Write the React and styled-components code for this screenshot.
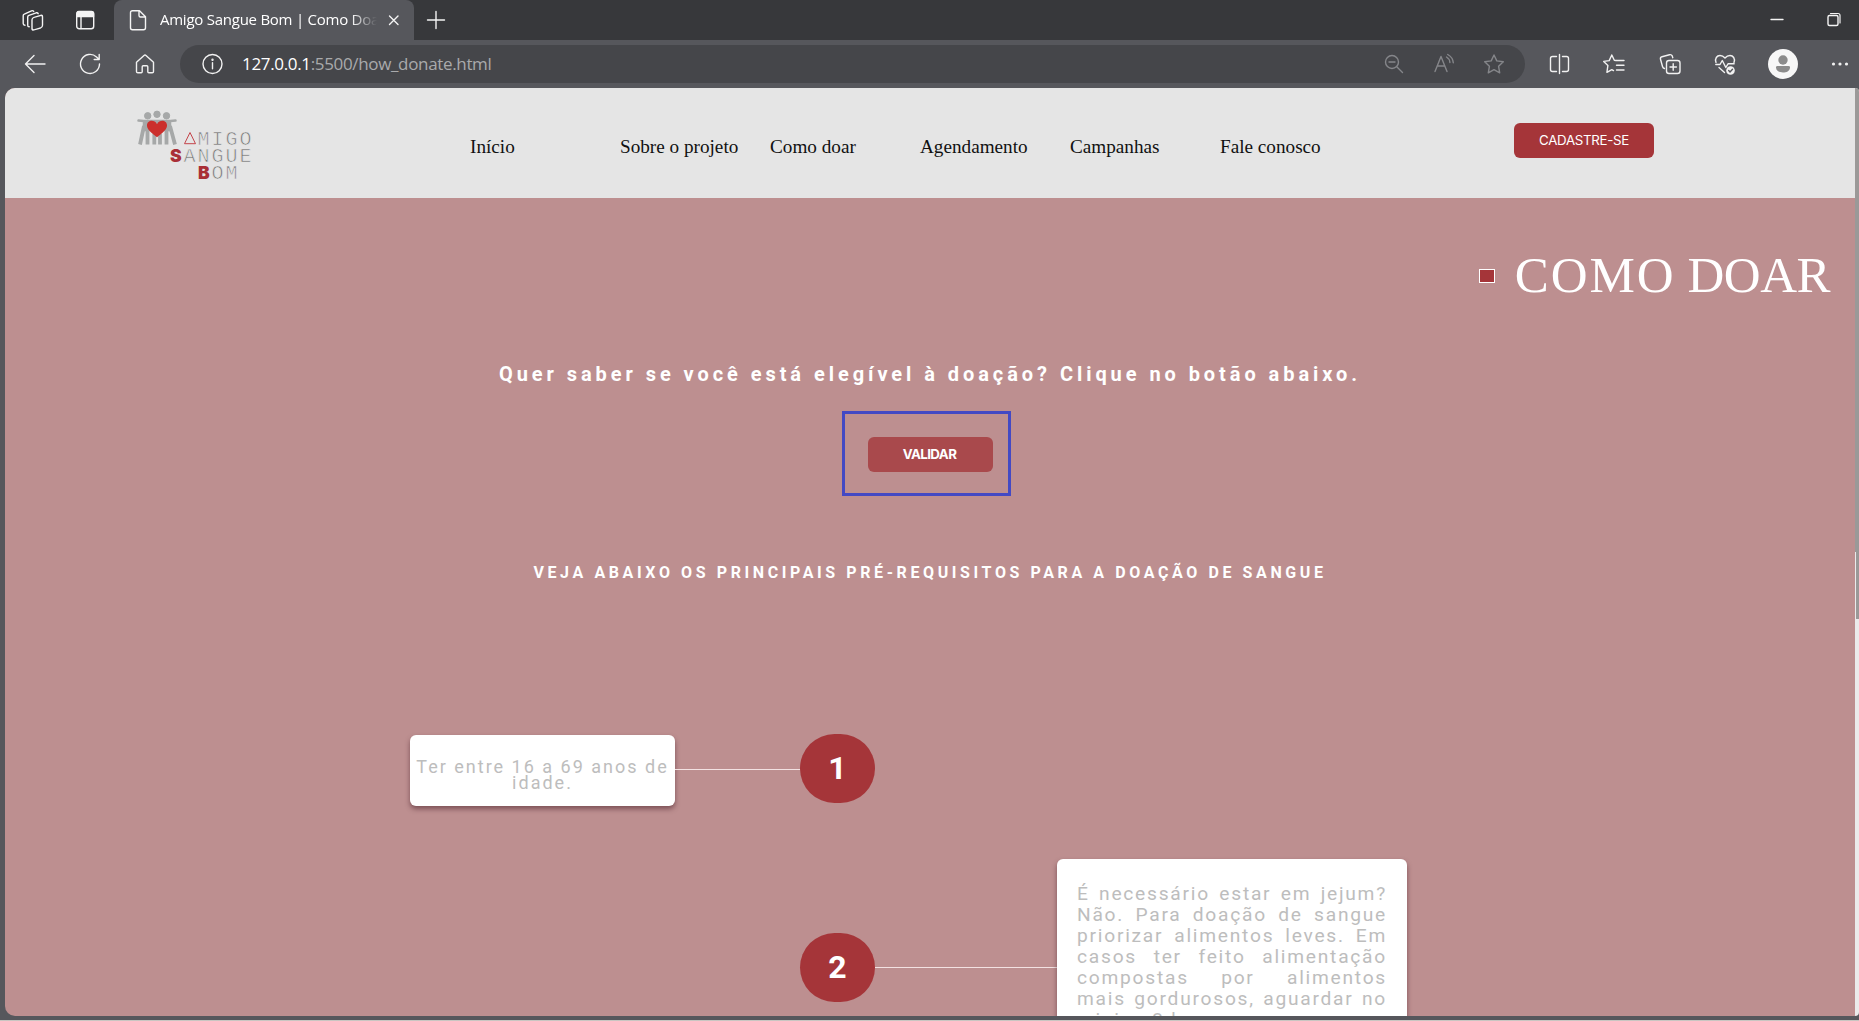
import React from "react";
import styled, { createGlobalStyle, css } from "styled-components";

const Global = createGlobalStyle`
  *, *::before, *::after { box-sizing: border-box; }
  html, body { margin: 0; padding: 0; overflow: hidden; background: #56575c; }
  h1, h2, h3, p { margin: 0; }
  button { border: 0; padding: 0; }
`;

const Window = styled.div`
  width: 1859px;
  height: 1021px;
  display: flex;
  flex-direction: column;
  background: #56575c;
  border-bottom: 1px solid #c9c6c2;
  overflow: hidden;
`;

/* ---------- browser chrome ---------- */

const TitleBar = styled.div`
  height: 40px;
  flex: none;
  display: flex;
  align-items: center;
  background: #37383b;
  color: #f4f4f4;
`;

const TitleTools = styled.div`
  width: 114px;
  padding-left: 21px;
  display: flex;
  gap: 28px;
`;

const Tab = styled.div`
  width: 300px;
  height: 40px;
  padding: 0 7px 0 12px;
  display: flex;
  align-items: center;
  background: #56575c;
  border-radius: 8px 8px 0 0;
`;

const TabTitle = styled.span`
  width: 217px;
  margin-left: 10px;
  margin-right: 4px;
  padding-bottom: 2px;
  overflow: hidden;
  white-space: nowrap;
  font: 400 15px/22px "Open Sans", "Noto Sans", sans-serif;
  letter-spacing: -0.25px;
  color: #fff;
  mask-image: linear-gradient(90deg, #000 88%, transparent 100%);
`;

const NewTab = styled.div`
  margin-left: 9px;
  display: flex;
  flex: 1;
`;

const WindowButtons = styled.div`
  display: flex;
  gap: 33px;
  padding-right: 13px;
`;

const Toolbar = styled.div`
  height: 48px;
  flex: none;
  display: flex;
  align-items: center;
  padding-left: 23px;
  color: #f1f1f1;
`;

const IconGroup = styled.div`
  display: flex;
  align-items: center;
  gap: ${(p) => p.$gap}px;
`;

const AddressBar = styled.div`
  width: 1345px;
  height: 38px;
  margin: 0 22px 0 23px;
  padding: 0 19px 0 20px;
  display: flex;
  align-items: center;
  border-radius: 19px;
  background: #45464a;
`;

const Url = styled.span`
  flex: 1;
  margin-left: 18px;
  font: 400 17px/24px "Open Sans", "Noto Sans", sans-serif;
  letter-spacing: -0.34px;
  color: #a9aaac;
  b { font-weight: 400; color: #fff; }
`;

const Muted = styled(IconGroup)`
  color: #85868a;
`;

const Glyph = styled.svg`
  width: ${(p) => p.$size || 24}px;
  height: ${(p) => p.$size || 24}px;
  flex: none;
  display: block;
  fill: none;
  stroke: currentColor;
  stroke-width: 1.4;
  stroke-linecap: round;
  stroke-linejoin: round;
`;

const Icon = ({ children, size }) => (
  <Glyph viewBox="0 0 24 24" $size={size}>{children}</Glyph>
);

const StackIcon = () => (
  <Icon>
    <rect x="0" y="0" width="10.500" height="12.500" rx="2" transform="matrix(1 -.3 0 1 11 10)" />
    <path d="M8.200 18.800q-1.500-.1-1.500-1.600V9q0-1.300 1.200-1.700l7.300-2.500q1.500-.4 2 .9" />
    <path d="M4 17.200q-1.800-.1-1.800-1.700V7.700q0-1.200 1.100-1.600L10.500 2.800q1.500-.5 2.200.6" />
  </Icon>
);

const WorkspaceIcon = () => (
  <Icon>
    <rect x="3.700" y="3.700" width="17" height="17" rx="2.500" />
    <path d="M4 4.500q.5-1 2-1h12.500q1.700 0 2 1.500v3.500H4z" fill="currentColor" />
    <path d="M8 9v11.500" />
  </Icon>
);

const DocumentIcon = () => (
  <Icon>
    <path d="M6.500 2.700h7l6 6v11q0 2-2 2h-11q-2 0-2-2v-15q0-2 2-2zM13 3v4.500q0 1.500 1.500 1.500h5" />
  </Icon>
);

const BackIcon = () => <Icon><path d="M22 12H2.500M11 3.500 2.500 12l8.500 8.500" /></Icon>;
const RefreshIcon = () => <Icon><path d="M21.500 12a9.500 9.500 0 1 1-3-7l2.500 2.300M21.200 2.500v5h-5" /></Icon>;
const HomeIcon = () => (
  <Icon><path d="M3.500 10.300 11 3.400q1-.9 2 0l7.500 6.900v9.200q0 1.300-1.300 1.300h-3.400q-1 0-1-1v-5q0-1-1-1h-3.600q-1 0-1 1v5q0 1-1 1H4.800q-1.300 0-1.300-1.300z" /></Icon>
);
const InfoIcon = () => (
  <Icon><circle cx="12.500" cy="12" r="9.500" /><path d="M12.500 10.800v6" /><circle cx="12.500" cy="7.800" r=".5" fill="currentColor" /></Icon>
);
const ZoomOutIcon = () => <Icon><circle cx="10" cy="10" r="6.500" /><path d="M7 10h6M15 15l5.500 5.500" /></Icon>;
const ReadAloudIcon = () => (
  <Icon><path d="M3 19.500 9 4.500l6 15M5.200 14h7.600M14.500 5q3.200 1.900 3.400 5.500M15.700 2.500q5.300 3 5.600 8.300" /></Icon>
);
const StarIcon = () => (
  <Icon><path d="m12 3 2.800 5.900 6.500.9-4.700 4.500 1.100 6.500-5.700-3.100-5.700 3.100 1.100-6.500-4.700-4.500 6.500-.9z" /></Icon>
);
const SplitIcon = () => (
  <Icon><path d="M12.500 2.500v19M9.500 4.500h-4Q3.500 4.500 3.500 6.500v11q0 2 2 2h4M15.500 4.500h4q2 0 2 2v11q0 2-2 2h-4" /></Icon>
);
const FavoritesIcon = () => (
  <Icon><path d="m14 8.500-1.700-.3L9.800 3 7.200 8.600l-5.500.8 4.200 4-1 7 4.900-2.800 1.700 1M14.500 8.500h7.500M14.500 13.300h7.500M14.500 18h7.500" /></Icon>
);
const CollectionsIcon = () => (
  <Icon>
    <rect x="8.500" y="8.500" width="13.500" height="13" rx="2.500" />
    <path d="M15.200 11.800v6.400M12 15h6.400M6.500 16.500q-1.500-.3-2-2L2.500 7.300Q2 5.300 4 4.700l7.500-2q2-.4 2.700 1.200l.6 1.800" />
  </Icon>
);
const HealthIcon = () => (
  <Icon>
    <path d="M3 10.500C1.500 6.500 4 3.500 7 3.500q2.800 0 5 2.500 2.200-2.500 5-2.500c3 0 5.500 3 4 7M2.800 12.500H7l2.300-4 3.500 7 2.400-3.800h6M6 15.500l5.500 5" />
    <circle cx="17.500" cy="18.500" r="4.300" fill="currentColor" stroke="none" />
    <path d="m15.700 18.600 1.300 1.300 2.500-2.700" stroke="#56575c" />
  </Icon>
);
const DotsIcon = () => (
  <Icon><g fill="currentColor" stroke="none"><circle cx="4.500" cy="12" r="1.600" /><circle cx="11" cy="12" r="1.600" /><circle cx="17.500" cy="12" r="1.600" /></g></Icon>
);

const Avatar = () => (
  <Glyph viewBox="0 0 30 30" $size={30}>
    <g stroke="none">
      <circle cx="15" cy="15" r="15" fill="#f7f7f7" />
      <circle cx="15" cy="11" r="4.700" fill="#8b8b8b" />
      <path d="M9.500 17h11q1.700 0 1.500 1.700C21.500 22 18.500 23.500 15 23.500S8.500 22 8 18.700Q7.800 17 9.500 17z" fill="#8b8b8b" />
    </g>
  </Glyph>
);

/* ---------- web page ---------- */

const Viewport = styled.div`
  height: 928px;
  flex: none;
  display: flex;
  padding-left: 5px;
`;

const Page = styled.div`
  width: 1850px;
  height: 928px;
  overflow: hidden;
  border-radius: 10px 0 0 10px;
  background: #bd8f90;
`;

const Scrollbar = styled.div`
  flex: 1;
  background: #ebebeb;
  border-radius: 0 6px 6px 0;
  overflow: hidden;
`;

const Thumb = styled.div`
  height: 531px;
  background: linear-gradient(#ebebeb, #ebebeb) 0 100% / 1px 67px no-repeat #9b9998;
`;

const Header = styled.header`
  height: 110px;
  display: flex;
  background: #e5e5e5;
`;

const LogoArt = styled.svg`
  width: 120px;
  height: 76px;
  margin: 20px 0 0 130px;
  flex: none;
`;

const Nav = styled.nav`
  margin-left: 215px;
  padding-top: 48px;
  display: grid;
  grid-template-columns: repeat(6, 150px);
`;

const NavLink = styled.a`
  font: 400 19.2px/22px "Liberation Serif", "Times New Roman", serif;
  color: #111;
  white-space: nowrap;
`;

const buttonBase = css`
  height: 35px;
  border-radius: 6px;
  font-family: Inter, sans-serif;
  font-size: 13.3px;
  color: #fff;
`;

const SignUp = styled.button`
  ${buttonBase}
  width: 140px;
  margin: 35px 0 0 144px;
  padding-bottom: 1px;
  background: #a53539;
  font-weight: 400;
  letter-spacing: -0.3px;
`;

const PageTitle = styled.div`
  margin-top: 47px;
  height: 60px;
  padding-right: 25px;
  display: flex;
  justify-content: flex-end;
  align-items: center;
  gap: 20px;
`;

const Marker = styled.span`
  width: 16px;
  height: 14px;
  margin-top: 1px;
  border: 1px solid #fff;
  background: #a53539;
`;

const Heading = styled.h1`
  display: flex;
  gap: 12px;
  font: 400 51px/60px "Liberation Serif", serif;
  color: #fff;
`;

const Word = styled.span`
  letter-spacing: ${(p) => p.$tracking}px;
`;

const Lead = styled.h2`
  margin-top: 57px;
  font: 700 20px/24px Roboto, sans-serif;
  letter-spacing: 3.94px;
  text-align: center;
  color: #fff;
`;

const Highlight = styled.div`
  width: 169px;
  height: 85px;
  margin: 25px 0 0 837px;
  padding: 23px 0 0 23px;
  border: 3px solid #4349c4;
`;

const Validate = styled.button`
  ${buttonBase}
  width: 125px;
  padding: 0 2px 1px 0;
  background: #a9494c;
  font-weight: 700;
  letter-spacing: -0.6px;
  display: block;
`;

const Subheading = styled.h3`
  margin-top: 67px;
  font: 700 16px/20px Roboto, sans-serif;
  letter-spacing: 3.6px;
  text-align: center;
  color: #fff;
`;

const Timeline = styled.section`
  margin-top: 151px;
  display: flex;
  flex-direction: column;
`;

const Step = styled.div`
  display: flex;
  align-items: flex-start;
  padding-left: ${(p) => p.$indent}px;
  height: ${(p) => p.$height}px;
`;

const Badge = styled.div`
  width: 75px;
  height: 69px;
  margin-top: ${(p) => p.$top}px;
  border-radius: 35px;
  display: flex;
  align-items: center;
  justify-content: center;
  background: #a53539;
  font: 700 32px/69px Roboto, sans-serif;
  color: #fff;
`;

const Connector = styled.div`
  width: ${(p) => p.$width}px;
  height: 1px;
  margin-top: ${(p) => p.$top}px;
  background: #f3e2e2;
`;

const Card = styled.div`
  border-radius: 6px;
  background: #fff;
  box-shadow: 0 3px 5px rgba(60, 20, 30, 0.5);
  font-family: Roboto, sans-serif;
  font-size: 18px;
  letter-spacing: 2px;
  color: #bdbdbd;
`;

const ShortCard = styled(Card)`
  width: 265px;
  height: 71px;
  margin-top: 1px;
  padding-top: 24px;
  line-height: 16px;
  text-align: center;
`;

const LongCard = styled(Card)`
  width: 350px;
  height: 180px;
  padding: 24px 20px 0;
  font-size: 19.2px;
  letter-spacing: 1.75px;
  line-height: 21px;
`;

const Line = styled.p`
  white-space: nowrap;
`;

const JustifiedLine = styled(Line)`
  text-align: justify;
  text-align-last: justify;
`;

const LogoText = styled.text`
  font-family: "Liberation Mono", monospace;
  font-size: 20px;
  fill: #777;
  stroke: #e5e5e5;
  stroke-width: 0.7px;
`;

const LogoInitial = styled.text`
  font-family: Inter, sans-serif;
  font-weight: 900;
  font-size: 17.5px;
  fill: #a92f36;
`;

const Logo = () => (
  <LogoArt viewBox="135 108 120 76">
    <g fill="#a6a8a8" stroke="#a6a8a8">
      <circle cx="147.700" cy="115.800" r="3.200" />
      <circle cx="157" cy="114.300" r="3.200" />
      <circle cx="166.500" cy="115.800" r="3.200" />
      <path d="M138.500 120.500l5 .5h27l5-.5M144 121h26v9h-26z" strokeWidth="2.500" strokeLinecap="round" strokeLinejoin="round" />
      <path d="M144 126l-4 18.500M147.500 130v14.500M154.300 134v10.500M160 134v10.500M166.500 130v14.500M170 126l5 18.500" fill="none" strokeWidth="3.800" />
    </g>
    <path d="M157 137.300C151 132.500 147 129.500 147 125.500c0-5.500 7.500-6.300 10-1.300 2.500-5 10-4.200 10 1.300 0 4-4 7-10 11.800z" fill="#cb2f2c" />
    <path d="M184.500 143.700 190 132.500l5.500 11.200z" fill="none" stroke="#c4444a" />
    <LogoText x="197.500 211.500 225.500 239.500" y="144.500">MIGO</LogoText>
    <LogoInitial x="170" y="161.800">S</LogoInitial>
    <LogoText x="183.500 197.500 211.500 225.500 239.500" y="161.800">ANGUE</LogoText>
    <LogoInitial x="198" y="178.800">B</LogoInitial>
    <LogoText x="211.500 225.500" y="178.800">OM</LogoText>
  </LogoArt>
);

const links = ["Início", "Sobre o projeto", "Como doar", "Agendamento", "Campanhas", "Fale conosco"];

const fasting = [
  "É necessário estar em jejum?",
  "Não. Para doação de sangue",
  "priorizar alimentos leves. Em",
  "casos ter feito alimentação",
  "compostas por alimentos",
  "mais gordurosos, aguardar no",
];

export default function App() {
  return (
    <Window>
      <Global />
      <TitleBar>
        <TitleTools>
          <StackIcon />
          <WorkspaceIcon />
        </TitleTools>
        <Tab>
          <DocumentIcon />
          <TabTitle>Amigo Sangue Bom | Como Doar</TabTitle>
          <Icon><path d="M8.500 8 17 16.500M17 8l-8.500 8.500" /></Icon>
        </Tab>
        <NewTab><Icon><path d="M13 3.500v17M4.500 12h17" /></Icon></NewTab>
        <WindowButtons>
          <Icon><path d="M6 11.500h12" /></Icon>
          <Icon><rect x="6" y="7.500" width="10" height="10" rx="1.500" /><path d="M8.500 5.500H16q2 0 2 2V15" strokeWidth="1.200" /></Icon>
        </WindowButtons>
      </TitleBar>

      <Toolbar>
        <IconGroup $gap={31}>
          <BackIcon />
          <RefreshIcon />
          <HomeIcon />
        </IconGroup>
        <AddressBar>
          <InfoIcon />
          <Url><b>127.0.0.1</b>:5500/how_donate.html</Url>
          <Muted $gap={26}>
            <ZoomOutIcon />
            <ReadAloudIcon />
            <StarIcon />
          </Muted>
        </AddressBar>
        <IconGroup $gap={31.3}>
          <SplitIcon />
          <FavoritesIcon />
          <CollectionsIcon />
          <HealthIcon />
          <Avatar />
          <DotsIcon />
        </IconGroup>
      </Toolbar>

      <Viewport>
        <Page>
          <Header>
            <Logo />
            <Nav>
              {links.map((label) => <NavLink key={label}>{label}</NavLink>)}
            </Nav>
            <SignUp>CADASTRE-SE</SignUp>
          </Header>

          <PageTitle>
            <Marker />
            <Heading>
              <Word $tracking={1.9}>COMO</Word>
              <Word $tracking={-0.5}>DOAR</Word>
            </Heading>
          </PageTitle>

          <Lead>Quer saber se você está elegível à doação? Clique no botão abaixo.</Lead>
          <Highlight>
            <Validate>VALIDAR</Validate>
          </Highlight>
          <Subheading>VEJA ABAIXO OS PRINCIPAIS PRÉ-REQUISITOS PARA A DOAÇÃO DE SANGUE</Subheading>

          <Timeline>
            <Step $indent={405} $height={125}>
              <ShortCard>
                <Line>Ter entre 16 a 69 anos de</Line>
                <Line>idade.</Line>
              </ShortCard>
              <Connector $width={125} $top={35} />
              <Badge $top={0}>1</Badge>
            </Step>
            <Step $indent={795} $height={180}>
              <Badge $top={74}>2</Badge>
              <Connector $width={182} $top={108} />
              <LongCard>
                {fasting.map((text) => <JustifiedLine key={text}>{text}</JustifiedLine>)}
                <Line>minino 3 horas.</Line>
              </LongCard>
            </Step>
          </Timeline>
        </Page>
        <Scrollbar><Thumb /></Scrollbar>
      </Viewport>
    </Window>
  );
}
